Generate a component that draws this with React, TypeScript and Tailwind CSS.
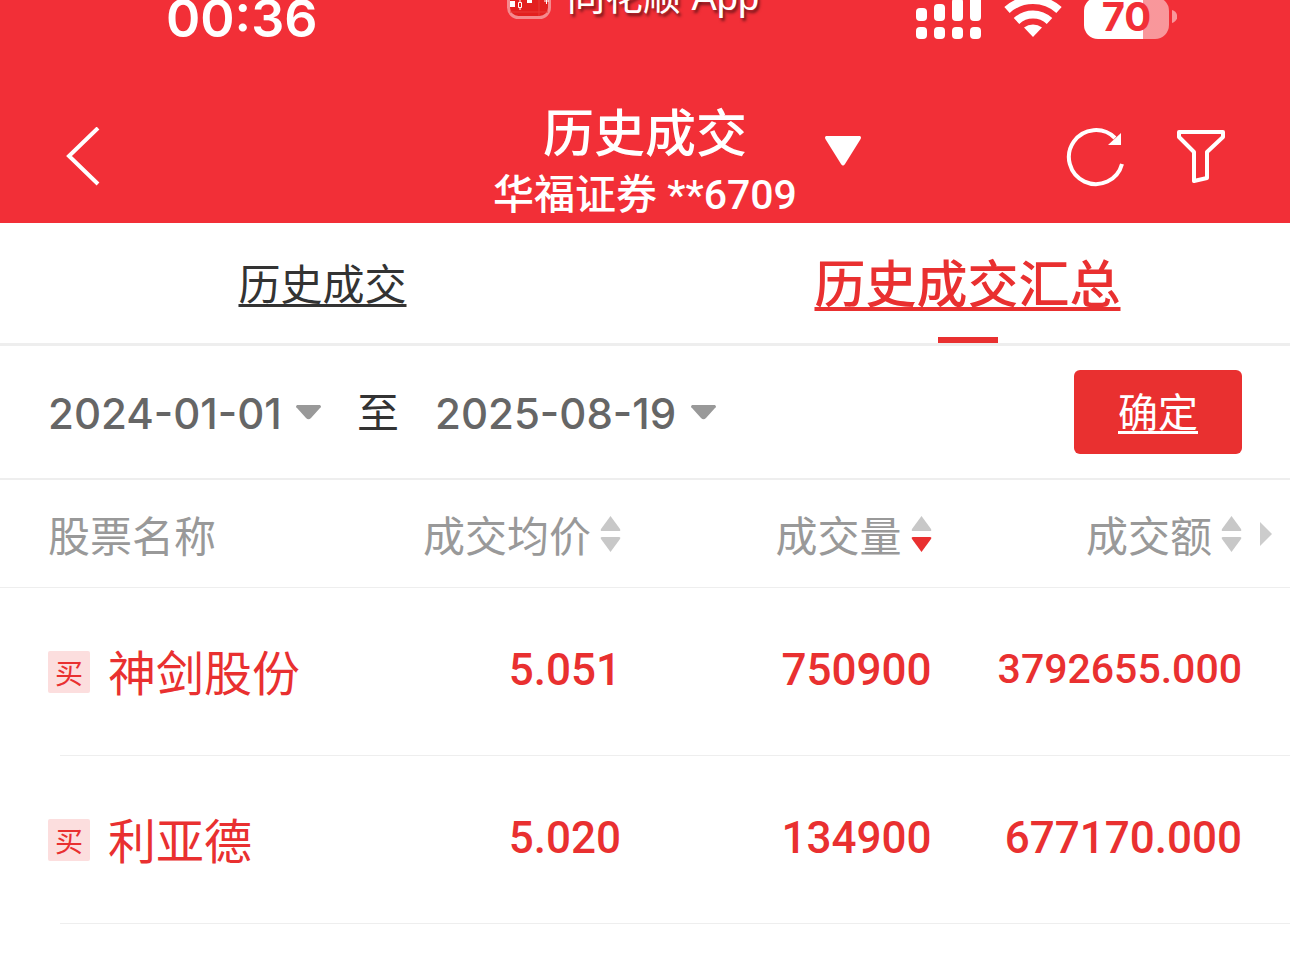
import clsx from "clsx"

type SortDirection = "none" | "desc"

interface Trade {
  name: string
  price: string
  volume: string
  amount: string
}

const trades: Trade[] = [
  { name: "神剑股份", price: "5.051", volume: "750900", amount: "3792655.000" },
  { name: "利亚德", price: "5.020", volume: "134900", amount: "677170.000" },
]

function SignalIcon() {
  return (
    <svg width="66" height="40" viewBox="0 0 66 40" fill="#fff" aria-hidden="true">
      <rect x="0" y="8" width="11" height="13" rx="4" />
      <rect x="18" y="4" width="11" height="17" rx="4" />
      <rect x="36" y="-2" width="11" height="23" rx="4" />
      <rect x="54" y="-8" width="11" height="29" rx="4" />
      <rect x="0" y="27" width="11" height="12" rx="4" />
      <rect x="18" y="27" width="11" height="12" rx="4" />
      <rect x="36" y="27" width="11" height="12" rx="4" />
      <rect x="54" y="27" width="11" height="12" rx="4" />
    </svg>
  )
}

function WifiIcon() {
  return (
    <svg width="58" height="40" viewBox="0 0 58 40" aria-hidden="true">
      <path d="M3 10A39 39 0 0 1 55 10" fill="none" stroke="#fff" strokeWidth="8" />
      <path d="M12.500 21A24 24 0 0 1 45.500 21" fill="none" stroke="#fff" strokeWidth="8" />
      <path d="M20 27.500A15 15 0 0 1 38 27.500L29 37Z" fill="#fff" />
    </svg>
  )
}

function Battery() {
  return (
    <div className="flex items-center gap-[3px]">
      <div className="-mt-[3px] flex h-[42px] w-[85px] items-center justify-center rounded-[14px] bg-linear-to-r from-white from-70% to-white/50 to-70% pb-[2px] font-['Inter',sans-serif] text-[40px] leading-none font-bold text-[#f22f37]">
        70
      </div>
      <svg width="5" height="19" viewBox="0 0 5 19" aria-hidden="true">
        <path d="M0 0C7 2 7 11 0 13Z" fill="#fff" fillOpacity=".5" />
      </svg>
    </div>
  )
}

function StatusBar() {
  return (
    <div className="grid h-[90px] grid-cols-3 items-start overflow-hidden">
      <time className="-mt-[12px] pl-[166px] font-['Inter',sans-serif] text-[52px] leading-[62px] font-semibold">00:36</time>
      <div className="-mt-[25px] flex items-center justify-center gap-4 pr-6">
        <svg width="44" height="44" viewBox="0 0 44 44" aria-hidden="true">
          <rect x="1.500" y="1.500" width="41" height="41" rx="10" fill="#e3201f" stroke="#f58a8d" strokeWidth="3" />
          <path d="M3 37H41M32 3V41" stroke="#e83a38" strokeWidth="1" />
          <path d="M3 26h5v6H3zM20 23h5v5h-5z" fill="#fff" />
          <path d="M11.500 27.500h3v5h-3zM13 24v3M13 32v3M37 26h5M39.500 23v6" fill="none" stroke="#fff" strokeWidth="1" />
        </svg>
        <span className="text-[38px] leading-[44px] [text-shadow:2px_3px_3px_rgba(0,0,0,0.5)]">同花顺 App</span>
      </div>
      <div className="flex items-start justify-end gap-[22px] pr-[113px]">
        <SignalIcon />
        <WifiIcon />
        <Battery />
      </div>
    </div>
  )
}

function NavBar() {
  return (
    <div className="grid h-[133px] grid-cols-[1fr_auto_1fr] items-center">
      <a href="#back" aria-label="返回" className="justify-self-start pl-16">
        <svg width="36" height="60" viewBox="0 0 36 60" fill="none" stroke="#fff" strokeWidth="4" aria-hidden="true">
          <path d="M34 1L5 29L34 57" />
        </svg>
      </a>
      <button type="button" aria-haspopup="listbox" className="flex items-center gap-7 self-end pl-16">
        <span className="flex flex-col items-center font-medium">
          <span className="text-[51px] leading-[64px]">历史成交</span>
          <span className="font-['Roboto','Noto_Sans_CJK_SC',sans-serif] text-[41px] leading-[56px]">华福证券 **6709</span>
        </span>
        <svg width="36" height="54" viewBox="0 0 36 54" fill="#fff" aria-hidden="true">
          <path d="M1 0H35Q37 1 35 4L20 28Q18 31 16 28L1 4Q-1 1 1 0Z" />
        </svg>
      </button>
      <div className="flex items-center gap-[50px] justify-self-end pr-16">
        <button type="button" aria-label="刷新">
          <svg width="60" height="60" viewBox="0 0 60 60" aria-hidden="true">
            <path d="M49 11A27 27 0 1 0 56 37" fill="none" stroke="#fff" strokeWidth="4" />
            <path d="M55 6V18H42Z" fill="#fff" />
          </svg>
        </button>
        <button type="button" aria-label="筛选">
          <svg width="50" height="56" viewBox="0 0 50 56" fill="none" stroke="#fff" strokeWidth="4" strokeLinejoin="round" aria-hidden="true">
            <path d="M3 3H47V8L31 23V49L18 52V23L3 8Z" />
          </svg>
        </button>
      </div>
    </div>
  )
}

function Tabs() {
  return (
    <nav className="grid h-[123px] grid-cols-2 border-b-[3px] border-[#eeeeee]">
      <a href="#history" className="flex items-center justify-center pb-1 text-[42px] text-[#333333] underline decoration-3 underline-offset-[4px]">
        历史成交
      </a>
      <a
        href="#summary"
        aria-current="page"
        className="relative flex items-center justify-center pb-1 text-[51px] font-medium text-[#e93030] underline decoration-4 underline-offset-[4px] after:absolute after:bottom-0 after:left-1/2 after:h-[6px] after:w-[60px] after:-translate-x-1/2 after:bg-[#e93030]"
      >
        历史成交汇总
      </a>
    </nav>
  )
}

function DateSelect({ label, value }: { label: string; value: string }) {
  return (
    <label className="flex items-center gap-[14px]">
      <select
        aria-label={label}
        defaultValue={value}
        className="appearance-none bg-transparent pt-1 font-['Inter',sans-serif] text-[42px] leading-[52px] font-medium text-[#666666] outline-none"
      >
        <option>{value}</option>
      </select>
      <svg width="25" height="15" viewBox="0 0 25 15" fill="#999" aria-hidden="true">
        <path d="M1 0H24Q26 2 24 3L15 13Q12.500 15.500 10 13L1 3Q-1 2 1 0Z" />
      </svg>
    </label>
  )
}

function DateFilter() {
  return (
    <form className="flex h-[134px] items-center justify-between border-b-2 border-[#eeeeee] px-12" onSubmit={(e) => e.preventDefault()}>
      <div className="flex items-center gap-9">
        <DateSelect label="开始日期" value="2024-01-01" />
        <span className="pb-1 text-[42px] leading-[52px] text-[#333333]">至</span>
        <DateSelect label="结束日期" value="2025-08-19" />
      </div>
      <button type="submit" className="h-[84px] w-[168px] rounded-md bg-[#e93030] pb-1 text-[40px] text-white underline decoration-3 underline-offset-[4px]">
        确定
      </button>
    </form>
  )
}

function SortHeader({ title, sort = "none" }: { title: string; sort?: SortDirection }) {
  return (
    <button type="button" className="ml-auto flex items-center gap-[9px] whitespace-nowrap">
      {title}
      <svg width="21" height="38" viewBox="0 0 21 38" fill="#c8c8c8" aria-hidden="true">
        <path d="M10.500 1L20 14Q21 16 19 16H2Q0 16 1 14Z" />
        <path d="M10.500 37L20 24Q21 22 19 22H2Q0 22 1 24Z" className={clsx(sort === "desc" && "fill-[#e93030]")} />
      </svg>
    </button>
  )
}

function TradeTable() {
  return (
    <table className="w-full table-fixed border-separate border-spacing-0">
      <thead>
        <tr className="h-[108px] text-[42px] leading-[52px] text-[#999999] [&>th]:border-b [&>th]:border-[#eeeeee] [&>th]:font-normal">
          <th scope="col" className="pl-12 text-left">股票名称</th>
          <th scope="col" className="pr-6 text-right"><SortHeader title="成交均价" /></th>
          <th scope="col" className="pr-9 text-right" aria-sort="descending"><SortHeader title="成交量" sort="desc" /></th>
          <th scope="col" className="relative pr-12 text-right">
            <SortHeader title="成交额" />
            <svg className="absolute top-[42px] right-[18px]" width="12" height="24" viewBox="0 0 12 24" fill="#ccc" aria-hidden="true">
              <path d="M0 0L12 12L0 24Z" />
            </svg>
          </th>
        </tr>
      </thead>
      <tbody>
        {trades.map((trade) => (
          <tr key={trade.name} className="relative h-[168px] text-right font-['Roboto',sans-serif] text-[44px] font-medium text-[#e93030]">
            <td className="pl-12 text-left font-['Noto_Sans_CJK_SC',sans-serif] font-normal after:absolute after:right-0 after:bottom-0 after:left-[60px] after:h-px after:bg-[#eeeeee]">
              <div className="flex items-center gap-[18px] whitespace-nowrap">
                <span className="flex size-[42px] shrink-0 items-center justify-center rounded-xs bg-[#fcdede] text-[28px] leading-none">买</span>
                <span className="pb-1 text-[48px] leading-[60px]">{trade.name}</span>
              </div>
            </td>
            <td className="pr-6 pb-1">{trade.price}</td>
            <td className="pr-9 pb-1">{trade.volume}</td>
            {/* long amounts drop a size so they stay inside the column */}
            <td className={clsx("pr-12 pb-1", trade.amount.length > 10 && "text-[41px]")}>{trade.amount}</td>
          </tr>
        ))}
      </tbody>
    </table>
  )
}

export default function App() {
  return (
    <div className="min-h-screen bg-white">
      <header className="bg-[#f22f37] font-['Liberation_Sans','Noto_Sans_CJK_SC',sans-serif] text-white">
        <StatusBar />
        <NavBar />
      </header>
      <main className="font-['Noto_Sans_CJK_SC',sans-serif]">
        <Tabs />
        <DateFilter />
        <TradeTable />
      </main>
    </div>
  )
}
